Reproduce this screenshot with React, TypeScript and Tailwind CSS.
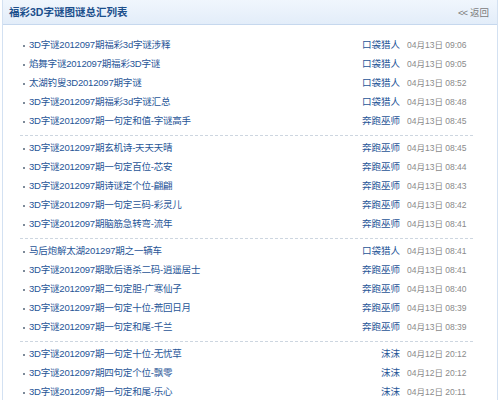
import React from 'react';

type Item = { title: string; author: string; date: string };

const groups: Item[][] = [
  [
    { title: '3D字谜2012097期福彩3d字谜涉释', author: '口袋猎人', date: '04月13日 09:06' },
    { title: '焰舞字谜2012097期福彩3D字谜', author: '口袋猎人', date: '04月13日 09:05' },
    { title: '太湖钓叟3D2012097期字谜', author: '口袋猎人', date: '04月13日 08:52' },
    { title: '3D字谜2012097期福彩3d字谜汇总', author: '口袋猎人', date: '04月13日 08:48' },
    { title: '3D字谜2012097期一句定和值-字谜高手', author: '奔跑巫师', date: '04月13日 08:45' },
  ],
  [
    { title: '3D字谜2012097期玄机诗-天天天晴', author: '奔跑巫师', date: '04月13日 08:45' },
    { title: '3D字谜2012097期一句定百位-芯安', author: '奔跑巫师', date: '04月13日 08:44' },
    { title: '3D字谜2012097期诗谜定个位-翩翩', author: '奔跑巫师', date: '04月13日 08:43' },
    { title: '3D字谜2012097期一句定三码-彩灵儿', author: '奔跑巫师', date: '04月13日 08:42' },
    { title: '3D字谜2012097期脑筋急转弯-流年', author: '奔跑巫师', date: '04月13日 08:41' },
  ],
  [
    { title: '马后炮解太湖201297期之一辆车', author: '口袋猎人', date: '04月13日 08:41' },
    { title: '3D字谜2012097期歌后语杀二码-逍遥居士', author: '奔跑巫师', date: '04月13日 08:41' },
    { title: '3D字谜2012097期二句定胆-广寒仙子', author: '奔跑巫师', date: '04月13日 08:40' },
    { title: '3D字谜2012097期一句定十位-荒回日月', author: '奔跑巫师', date: '04月13日 08:39' },
    { title: '3D字谜2012097期一句定和尾-千兰', author: '奔跑巫师', date: '04月13日 08:39' },
  ],
  [
    { title: '3D字谜2012097期一句定十位-无忧草', author: '沫沫', date: '04月12日 20:12' },
    { title: '3D字谜2012097期四句定个位-飘零', author: '沫沫', date: '04月12日 20:12' },
    { title: '3D字谜2012097期一句定和尾-乐心', author: '沫沫', date: '04月12日 20:11' },
  ],
];

const font = "font-['Liberation_Sans','Noto_Sans_CJK_SC',sans-serif]";

export default function App() {
  return (
    <div className={`w-[500px] h-[400px] overflow-hidden bg-white ${font}`}>
      <div className="mx-[2px] h-full border-x border-[#d3e1f2]">
        <div className="h-[25px] flex items-center justify-between pl-[6px] pr-[8px] bg-gradient-to-b from-[#f0f6fd] to-[#e3edf9] border-b border-[#c6d8ee]">
          <span className="text-[10.5px] font-bold text-[#1c4f8c] pt-[1px]">福彩3D字谜图谜总汇列表</span>
          <span className="text-[9.5px] text-[#7a7a7a] pt-[3px]">
            <span className="tracking-[-1px] mr-[3px]">&lt;&lt;</span>返回
          </span>
        </div>
        <div className="pt-[11px] pl-[17px] pr-[24px]">
          {groups.map((g, gi) => (
            <ul
              key={gi}
              className={gi < groups.length - 1 ? 'pb-[4px] mb-[3px] border-b border-dashed border-[#cdd6e0]' : ''}
            >
              {g.map((it, i) => (
                <li key={i} className="h-[19px] flex items-center text-[9.5px]">
                  <span className="w-[2px] h-[2px] bg-[#7d8a99] ml-[3px] mr-[4px]" />
                  <a className="flex-1 text-[#1f5597] whitespace-nowrap tracking-[-0.2px]">{it.title}</a>
                  <span className="w-[80px] text-right text-[#1f5597]">{it.author}</span>
                  <span className="w-[66px] mr-[7px] pl-[7px] text-[8.5px] text-[#8a8a8a] whitespace-nowrap">{it.date}</span>
                </li>
              ))}
            </ul>
          ))}
        </div>
      </div>
    </div>
  );
}
